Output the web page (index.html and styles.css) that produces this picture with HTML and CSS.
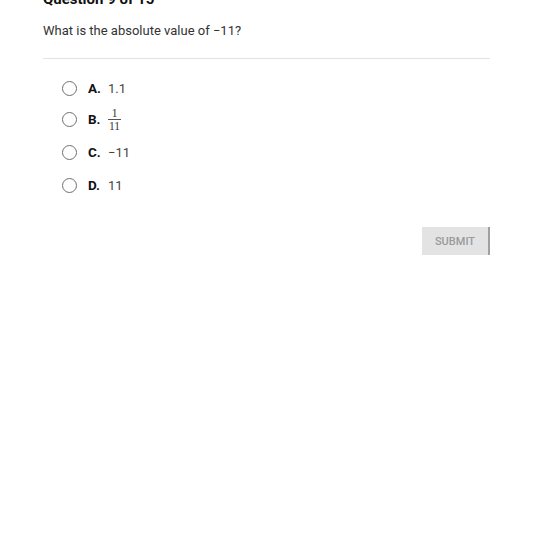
FILE: index.html
```html
<!DOCTYPE html>
<html>
<head>
<meta charset="utf-8">
<link rel="stylesheet" href="styles.css">
</head>
<body>
<div class="page">
  <div class="title">Question 9 of 15</div>
  <div class="question">What is the absolute value of −11?</div>
  <div class="divider"></div>
  <div class="options">
    <div class="option"><span class="radio"></span><span class="letter">A.</span><span class="value">1.1</span></div>
    <div class="option opt-frac"><span class="radio"></span><span class="letter">B.</span><span class="value frac"><span class="num">1</span><span class="den">11</span></span></div>
    <div class="option"><span class="radio"></span><span class="letter">C.</span><span class="value">−11</span></div>
    <div class="option"><span class="radio"></span><span class="letter">D.</span><span class="value">11</span></div>
  </div>
  <div class="actions"><button class="submit">SUBMIT</button></div>
</div>
</body>
</html>
```
FILE: styles.css
```css
html, body {
  margin: 0;
  padding: 0;
  background: #fff;
}
body {
  font-family: Roboto, "Liberation Sans", sans-serif;
  color: #222;
}
.page {
  width: 447px;
  padding-left: 43px;
}
.title {
  font-weight: 700;
  font-size: 15px;
  line-height: 16px;
  margin-top: -9px;
  color: #111;
}
.question {
  font-size: 13px;
  line-height: 16px;
  margin-top: 16px;
  color: #333;
}
.divider {
  height: 1px;
  background: #e2e2e2;
  margin-top: 19px;
}
.options {
  display: flex;
  flex-direction: column;
  padding-left: 19px;
  margin-top: 20px;
  gap: 14px;
}
.option {
  display: flex;
  align-items: center;
  height: 18px;
}
.option.opt-frac {
  height: 22px;
  margin-top: -3px;
  margin-bottom: -1px;
}
.option:last-child {
  margin-top: 1px;
}
.radio {
  width: 13px;
  height: 13px;
  border: 1.6px solid #707070;
  border-radius: 50%;
  flex: none;
}
.letter {
  font-weight: 700;
  font-size: 13.5px;
  margin-left: 11px;
  width: 20px;
  color: #111;
}
.value {
  font-size: 13px;
  color: #444;
}
.frac {
  display: inline-flex;
  flex-direction: column;
  align-items: center;
  font-family: "Liberation Serif", serif;
  font-size: 11.5px;
  line-height: 10px;
  color: #333;
}
.frac .num {
  padding: 0 1px 1px;
}
.frac .den {
  border-top: 1px solid #555;
  padding: 1px 1px 0;
}
.actions {
  display: flex;
  justify-content: flex-end;
  margin-top: 33px;
}
.submit {
  width: 68px;
  height: 28px;
  background: #e3e3e3;
  border: none;
  border-right: 2px solid #a0a0a0;
  color: #9a9a9a;
  font-family: Roboto, "Liberation Sans", sans-serif;
  font-size: 11px;
  font-weight: 500;
  padding: 0;
}
```
